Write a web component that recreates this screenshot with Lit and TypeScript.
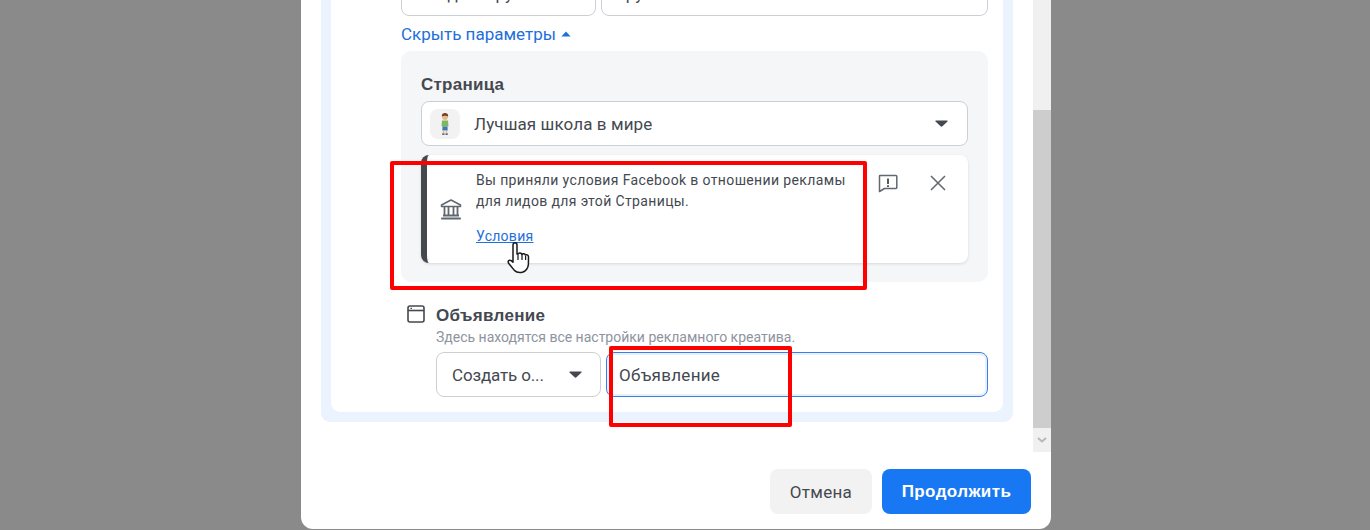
import { LitElement, html, css } from "lit";
import { customElement } from "lit/decorators.js";

const caret = html`<svg class="caret" width="13" height="7" viewBox="0 0 14 8" preserveAspectRatio="none"><path d="M1.2 0.5h11.6c.7 0 1 .8.6 1.3L8 7.2c-.6.5-1.4.5-2 0L.6 1.8C.2 1.3.5.5 1.2.5z" fill="#444950"/></svg>`;

@customElement("app-root")
export class AppRoot extends LitElement {
  static styles = css`
    :host { display: block; width: 1370px; height: 530px; overflow: hidden; position: relative; background: #8a8a8a;
      font-family: Roboto, "Liberation Sans", sans-serif; color: #444950; }
    .modal { width: 750px; height: 529px; margin-left: 301px; background: #fff; border-radius: 0 0 12px 12px;
      display: flex; flex-direction: column; overflow: hidden; }
    .scroll { height: 452px; display: flex; flex: none; }
    .content { flex: 1; padding: 0 20px; min-width: 0; }
    .scrollbar { width: 18px; background: #f0f0f0; display: flex; flex-direction: column; justify-content: flex-end; padding-top: 110px; box-sizing: border-box; }
    .thumb { flex: 1; background: #cdcdcd; }
    .arrow { height: 24px; display: flex; align-items: center; justify-content: center; }
    .outer { height: 451px; margin-top: -29px; box-sizing: border-box; background: #ebf3fe; padding: 0 10px 10px; border-radius: 0 0 9px 9px; width: 692px; }
    .inner { height: 100%; box-sizing: border-box; background: #fff; border-radius: 0 0 9px 9px; padding: 0 15px 0 70px; }
    .inner-top { display: flex; gap: 5px; }
    .field { height: 45px; box-sizing: border-box; border: 1px solid #ccd0d5; border-radius: 8px; background: #fff;
      display: flex; align-items: center; font-size: 17px; color: #444950; padding: 0 16px; }
    .f1 { width: 195px; }
    .f2 { flex: 1; }
    .toggle { display: flex; align-items: center; gap: 5px; margin-top: 7px; height: 21px; font-size: 17px; color: #216fdb; }
    .panel { margin-top: 7px; height: 231px; box-sizing: border-box; background: #f5f6f7; border-radius: 10px; padding: 20px; }
    .panel-title { font-family: "Liberation Sans", sans-serif; font-size: 17px; font-weight: 700; letter-spacing: .25px; color: #444950; line-height: 26px; padding-top: 1px; }
    .pagesel { margin-top: 3px; height: 45px; box-sizing: border-box; border: 1px solid #ccd0d5; border-radius: 8px; background: #fff;
      display: flex; align-items: center; padding: 0 19px 0 8px; font-size: 17px; letter-spacing: .1px; }
    .avatar { width: 30px; height: 30px; border-radius: 8px; background: #f2f2f2; display: flex; align-items: center; justify-content: center; flex: none; }
    .pagename { flex: 1; margin-left: 14px; }
    .notice { margin-top: 9px; height: 108px; box-sizing: border-box; background: #fff; border-radius: 8px; border-left: 6px solid #444950;
      box-shadow: 0 1px 3px rgba(0,0,0,.12); display: flex; }
    .n-icon { width: 49px; flex: none; display: flex; align-items: center; justify-content: center; padding-right: 1px; padding-top: 1px; box-sizing: border-box; }
    .n-body { width: 392px; flex: none; padding-top: 15px; font-size: 14px; line-height: 21px; letter-spacing: .37px; color: #444950; }
    .n-body a { display: block; margin-top: 14px; color: #216fdb; text-decoration: underline; letter-spacing: .28px; }
    .n-actions { display: flex; gap: 30px; padding: 18px 0 0 10px; align-items: flex-start; }
    .ad { display: flex; margin-top: 23px; margin-left: 7px; }
    .ad-icon { width: 28px; flex: none; margin-left: -1px; margin-right: 1px; }
    .ad-main { flex: 1; }
    .ad-title { font-family: "Liberation Sans", sans-serif; font-size: 17px; font-weight: 700; letter-spacing: .3px; line-height: 20px; padding-top: 1px; color: #444950; }
    .ad-desc { font-size: 14px; line-height: 18px; margin-top: 2px; color: #8d949e; }
    .ad-row { display: flex; gap: 5px; margin-top: 6px; }
    .sel { width: 165px; flex: none; justify-content: space-between; padding: 0 18px 0 15px; letter-spacing: -.15px; }
    .input { flex: 1; border-color: #3a7fe6; padding: 0 12px; box-shadow: inset 0 0 0 2px #e7f0fd; letter-spacing: .3px; }
    .footer { flex: 1; display: flex; justify-content: flex-end; align-items: flex-start; gap: 10px; padding: 17px 20px 0 0; }
    .btn { height: 45px; border-radius: 8px; display: flex; align-items: center; justify-content: center; font-size: 17px; }
    .cancel { width: 102px; background: #f2f2f2; color: #444950; letter-spacing: .3px; }
    .go { width: 149px; background: #1877f2; color: #fff; font-weight: 700; font-family: "Liberation Sans", sans-serif; letter-spacing: .4px; }
    .mark { position: absolute; border: 4px solid #f00; border-radius: 2px; box-sizing: border-box; pointer-events: none; }
    .m1 { left: 390px; top: 161px; width: 477px; height: 129px; }
    .m2 { left: 609px; top: 346px; width: 183px; height: 81px; }
    .cursor { position: absolute; left: 507px; top: 242px; }
  `;

  render() {
    return html`
      <div class="modal">
        <div class="scroll">
          <div class="content">
            <div class="outer">
              <div class="inner">
                <div class="inner-top">
                  <div class="field f1">Создать гру...</div>
                  <div class="field f2">Группа</div>
                </div>
                <div class="toggle">Скрыть параметры
                  <svg width="10" height="6" viewBox="0 0 10 6"><path d="M5 .5 9.6 5.5H.4z" fill="#216fdb"/></svg>
                </div>
                <div class="panel">
                  <div class="panel-title">Страница</div>
                  <div class="pagesel">
                    <div class="avatar">
                      <svg width="12" height="24" viewBox="0 0 12 24">
                        <circle cx="6" cy="5" r="3" fill="#e6b995"/>
                        <path d="M2.8 4.5C2.6 1.8 4.4 1 6 1s3.4.8 3.2 3.5C8 3.4 4 3.4 2.8 4.5z" fill="#7a3b1e"/>
                        <path d="M3 8.5h6l.5 6h-7z" fill="#7fb85e"/>
                        <path d="M3.5 14.5h5l.2 4H3.3z" fill="#3f78b5"/>
                        <path d="M3.8 18.5h1.5v3H3.8zM6.7 18.5h1.5v3H6.7z" fill="#e6b995"/>
                        <path d="M3.2 21.5h2.3v1.3H3.2zM6.5 21.5h2.3v1.3H6.5z" fill="#2d3f55"/>
                      </svg>
                    </div>
                    <div class="pagename">Лучшая школа в мире</div>
                    ${caret}
                  </div>
                  <div class="notice">
                    <div class="n-icon">
                      <svg width="22" height="21" viewBox="0 0 22 21" fill="none" stroke="#606770" stroke-width="1.5">
                        <path d="M11 1 20.5 6v1.5h-19V6z" stroke-linejoin="round"/>
                        <path d="M4.5 8v8M8.5 8v8M13.5 8v8M17.5 8v8" stroke-width="1.8"/>
                        <path d="M3 16.5h16M1.2 19.5h19.6" stroke-width="2"/>
                      </svg>
                    </div>
                    <div class="n-body">
                      Вы приняли условия Facebook в отношении рекламы<br />для лидов для этой Страницы.
                      <a>Условия</a>
                    </div>
                    <div class="n-actions">
                      <svg width="20" height="20" viewBox="0 0 20 20" fill="none" stroke="#606770" stroke-width="1.5">
                        <path d="M2 2.5h16a.8.8 0 0 1 .8.8v11.4a.8.8 0 0 1-.8.8H6.5L1.5 18.5V3.3a.8.8 0 0 1 .5-.8z" stroke-linejoin="round"/>
                        <path d="M10 5.5v5.5M10 12.2v1.8" stroke="#444950" stroke-width="1.8"/>
                      </svg>
                      <svg width="20" height="20" viewBox="0 0 20 20" fill="none" stroke="#606770" stroke-width="1.5">
                        <path d="M3 3l14 14M17 3 3 17"/>
                      </svg>
                    </div>
                  </div>
                </div>
                <div class="ad">
                  <div class="ad-icon">
                    <svg width="18" height="18" viewBox="0 0 18 18" fill="none" stroke="#444950" stroke-width="1.6">
                      <rect x="1" y="1" width="16" height="16" rx="2"/>
                      <path d="M1 5.5h16" />
                      <path d="M3.5 3.4h1.5" stroke-width="1.2"/>
                    </svg>
                  </div>
                  <div class="ad-main">
                    <div class="ad-title">Объявление</div>
                    <div class="ad-desc">Здесь находятся все настройки рекламного креатива.</div>
                    <div class="ad-row">
                      <div class="field sel">Создать о... ${caret}</div>
                      <div class="field input">Объявление</div>
                    </div>
                  </div>
                </div>
              </div>
            </div>
          </div>
          <div class="scrollbar">
            <div class="thumb"></div>
            <div class="arrow">
              <svg width="10" height="6" viewBox="0 0 10 6" fill="none" stroke="#b8b8b8" stroke-width="2"><path d="M1 1l4 3.5L9 1"/></svg>
            </div>
          </div>
        </div>
        <div class="footer">
          <div class="btn cancel">Отмена</div>
          <div class="btn go">Продолжить</div>
        </div>
      </div>
      <div class="mark m1"></div>
      <div class="mark m2"></div>
      <svg class="cursor" width="24" height="32" viewBox="0 0 24 32">
        <path d="M6 3c0-3 4-3 4 0v9l1 .2c.6-1.6 3.4-1.4 3.8.3.8-1.2 3.2-1 3.6.6 1-.8 3-.2 3.1 1.6l-.1 7.5c-.2 3.5-2.5 7.3-6 8-3 .6-6 .2-8-1.8L2.2 22C.6 20.3.8 18 3 18.2c1 0 2.2 1 3 2z" fill="#fff" stroke="#1a1a1a" stroke-width="1.5" stroke-linejoin="round"/>
        <path d="M11 13v5M15 13v5M18.6 14v4" stroke="#1a1a1a" stroke-width="1.2"/>
      </svg>
    `;
  }
}
